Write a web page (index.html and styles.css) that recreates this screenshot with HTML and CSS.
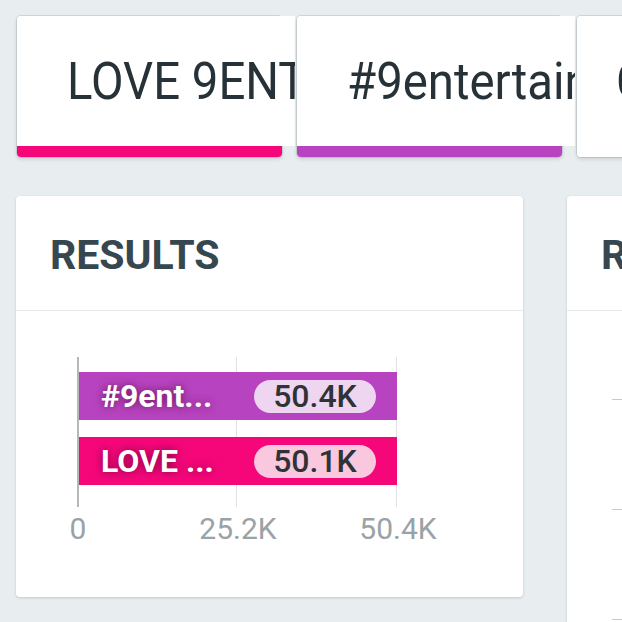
FILE: index.html
```html
<!DOCTYPE html>
<html>
<head>
<meta charset="utf-8">
<link rel="stylesheet" href="styles.css">
</head>
<body>
  <div class="tabs">
    <div class="tab">
      <div class="tab-body"><span class="tab-text">LOVE 9ENTERTAINMENT</span></div>
      <div class="tab-bar pink"></div>
    </div>
    <div class="tab">
      <div class="tab-body"><span class="tab-text">#9entertainment</span></div>
      <div class="tab-bar purple"></div>
    </div>
    <div class="tab">
      <div class="tab-body tab-body-short"><span class="tab-text">Compare</span></div>
      <div class="tab-bar none"></div>
    </div>
  </div>

  <div class="cards">
    <div class="card">
      <div class="card-head">RESULTS</div>
      <div class="chart">
        <div class="plot">
          <div class="grid g1"></div>
          <div class="grid g2"></div>
          <div class="bars">
            <div class="bar purple">
              <span class="bar-label">#9ent...</span>
              <span class="pill pill-purple">50.4K</span>
            </div>
            <div class="bar pink">
              <span class="bar-label">LOVE ...</span>
              <span class="pill pill-pink">50.1K</span>
            </div>
          </div>
        </div>
        <div class="axis">
          <span class="tick">0</span>
          <span class="tick">25.2K</span>
          <span class="tick">50.4K</span>
        </div>
      </div>
    </div>
    <div class="card card-right">
      <div class="card-head">RESULTS OVER TIME</div>
      <div class="yticks">
        <span class="ytick"></span>
        <span class="ytick"></span>
        <span class="ytick"></span>
      </div>
    </div>
  </div>
</body>
</html>
```

FILE: styles.css
```css
html, body {
  margin: 0;
  padding: 0;
  overflow: hidden;
  width: 622px;
  height: 622px;
}

body {
  background: #e8edf0;
  font-family: Roboto, "Liberation Sans", sans-serif;
  color: #263238;
}

.tabs {
  display: flex;
  gap: 15px;
  padding: 16px 0 0 17px;
  width: max-content;
}

.tab {
  position: relative;
  width: 265px;
  height: 141px;
  flex-shrink: 0;
  display: flex;
  flex-direction: column;
  background: #fff;
  border-radius: 4px;
  box-shadow: 0 0 0 1px rgba(90, 110, 120, 0.18), 0 2px 4px rgba(0, 0, 0, 0.14);
}

.tab-body {
  flex: 1;
  width: calc(100% + 13px);
  box-sizing: border-box;
  padding-left: 50px;
  display: flex;
  align-items: center;
  background: #fff;
  border-top-left-radius: 4px;
  white-space: nowrap;
  overflow: hidden;
}

.tab-body-short {
  width: 100%;
  padding-left: 39px;
}

.tab-text {
  display: inline-block;
  font-size: 52px;
  color: #263238;
  transform: scaleX(0.91);
  transform-origin: left center;
}

.tab-bar {
  height: 11px;
  border-radius: 0 0 4px 4px;
}

.tab-bar.none {
  background: #fff;
}

.pink {
  background: #f5077a;
}

.purple {
  background: #b843c0;
}

.cards {
  display: flex;
  gap: 44px;
  padding-left: 16px;
  margin-top: 39px;
  width: max-content;
}

.card {
  width: 507px;
  height: 401px;
  flex-shrink: 0;
  background: #fff;
  border-radius: 4px;
  box-shadow: 0 1px 3px rgba(0, 0, 0, 0.16);
}

.card-right {
  height: 460px;
}

.card-head {
  height: 115px;
  box-sizing: border-box;
  padding: 4px 0 0 34px;
  display: flex;
  align-items: center;
  border-bottom: 1px solid #e6e9eb;
  font-size: 41px;
  font-weight: 700;
  color: #36474f;
  white-space: nowrap;
}

.chart {
  padding: 46px 0 0 61px;
}

.plot {
  position: relative;
  width: 320px;
  height: 150px;
  box-sizing: border-box;
  padding-top: 15px;
  border-left: 2px solid #b3b8bb;
}

.grid {
  position: absolute;
  top: 0;
  bottom: 0;
  width: 1px;
  background: #dfe2e4;
}

.g1 {
  left: 157px;
}

.g2 {
  left: 317px;
}

.bars {
  position: relative;
  display: flex;
  flex-direction: column;
  gap: 17px;
}

.bar {
  height: 48px;
  width: 318px;
  display: flex;
  align-items: center;
  box-sizing: border-box;
  padding: 0 21px 0 22px;
}

.bar-label {
  font-size: 32px;
  font-weight: 700;
  color: #fff;
  text-shadow: 0 0 8px rgba(70, 0, 40, 0.7);
  white-space: nowrap;
}

.pill {
  margin-left: auto;
  width: 122px;
  height: 33px;
  border-radius: 17px;
  display: flex;
  align-items: center;
  justify-content: center;
  font-size: 32px;
  font-weight: 500;
  color: #2e3336;
}

.pill-purple {
  background: #eed5f0;
}

.pill-pink {
  background: #f9c7de;
}

.axis {
  display: flex;
  margin: 5px 0 0 -79px;
}

.tick {
  width: 160px;
  text-align: center;
  font-size: 30px;
  line-height: 34px;
  color: #9ba2a6;
}

.yticks {
  display: flex;
  flex-direction: column;
  gap: 109px;
  padding: 88px 0 0 45px;
}

.ytick {
  display: block;
  width: 12px;
  height: 1px;
  background: #c5cacd;
}
```
